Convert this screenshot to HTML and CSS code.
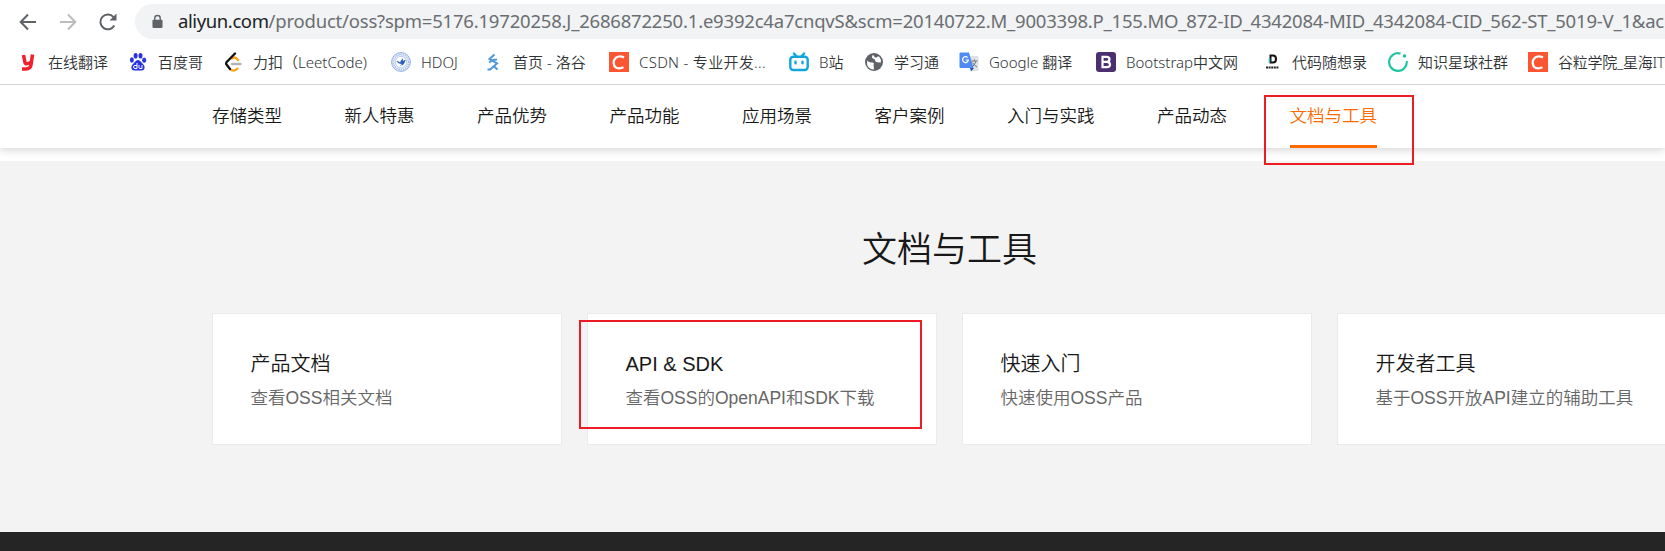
FILE: index.html
```html
<!DOCTYPE html>
<html lang="zh-CN">
<head>
<meta charset="utf-8">
<title>文档与工具</title>
<link rel="stylesheet" href="styles.css">
</head>
<body>
<div class="browser">
  <div class="toolbar">
    <svg class="tool back" viewBox="0 0 20 20"><path d="M18 10H3M10 2.5 2.7 10l7.3 7.5"/></svg>
    <svg class="tool forward" viewBox="0 0 20 20"><path d="M2 10h15M10 2.5l7.3 7.5-7.3 7.5"/></svg>
    <svg class="tool reload" viewBox="0 0 20 20"><path d="M16.3 13.5A7.4 7.4 0 1 1 15.500 5.200L17 7"/><path class="solid" d="M18.500 1.500v7h-7z"/></svg>
    <div class="omnibox">
      <svg class="lock" viewBox="0 0 12 15"><path d="M3 6V4a3 3 0 0 1 6 0v2" fill="none" stroke="#5f6368" stroke-width="1.500"/><rect x=".5" y="5.500" width="11" height="9" rx="1.300" fill="#5f6368"/></svg>
      <span class="host">aliyun.com</span><span class="path">/product/oss?spm=5176.19720258.J_2686872250.1.e9392c4a7cnqvS&amp;scm=20140722.M_9003398.P_155.MO_872-ID_4342084-MID_4342084-CID_562-ST_5019-V_1&amp;ac</span>
    </div>
  </div>
  <div class="bookmarks">
    <div class="mark w110"><svg viewBox="0 0 20 20"><path d="M5.500 3 7 10.500q.5 2 3 1L14 10M14.500 2.500 13 13q-.8 4-5 4H4" fill="none" stroke="#f0202c" stroke-width="3.500"/></svg><span>在线翻译</span></div>
    <div class="mark w95"><svg viewBox="0 0 20 20" fill="#2932e1"><ellipse cx="3.900" cy="8" rx="2" ry="2.700"/><ellipse cx="7.600" cy="3.800" rx="2" ry="2.800"/><ellipse cx="12.500" cy="3.800" rx="2" ry="2.800"/><ellipse cx="16.200" cy="8.200" rx="2" ry="2.600"/><path d="M10 8c2.500 0 3 2.300 5.200 4.200 2.500 2.200 1.500 6.300-1.500 6.300H6.300c-3 0-4-4.100-1.500-6.300C7 10.300 7.500 8 10 8z"/><path d="M9 11v5.500H7a1.500 1.500 0 0 1 0-3h2M11 13v2.500q0 1 1 1h2V13" fill="none" stroke="#fff"/></svg><span>百度哥</span></div>
    <div class="mark w168"><svg viewBox="0 0 20 20" fill="none" stroke-width="2.300" stroke-linecap="round"><path d="m9 6.500 2.500-1q1.500 0 3.500 2.500M7 17q3.500 3.500 7.500-.5" stroke="#ffa116"/><path d="m12 1.500-8.500 8.800q-.8 1.200 0 2.200L7 17" stroke="#111"/><path d="M9 12h8.500" stroke="#b3b3b3"/></svg><span>力扣（LeetCode)</span></div>
    <div class="mark w92"><svg viewBox="0 0 20 20"><circle cx="10" cy="10" r="9.400" fill="#e3ebf8" stroke="#8faee0"/><circle cx="10" cy="10" r="7.600" fill="none" stroke="#9bb5e4" stroke-dasharray="1 1.200" stroke-width="1.300"/><circle cx="10" cy="10" r="5.700" fill="#fff" stroke="#a9c0e8" stroke-width=".7"/><path d="M5.500 9q3 0 3.500 1.500Q10 7.500 12 6q-.5 2 0 3 1-1 3-1-1 1-1.500 3-1.500 3-5 2.500 2-1 2.500-1.500-4 0-5.500-3z" fill="#2860bd"/></svg><span>HDOJ</span></div>
    <div class="mark w126"><svg viewBox="0 0 20 20" fill="none" stroke="#4f96d8" stroke-width="2"><path d="M11.500 2.500 6.500 7l7.500 4.500-7 6H4.500M6 10.500l4-2.500 4-.5M10.500 14l4 3.500"/></svg><span>首页 - 洛谷</span></div>
    <div class="mark w180 wide"><svg viewBox="0 0 20 20"><path fill="#fc5531" d="M0 0h20v20H0z"/><path d="M15 5.500q-4.500-2.500-8 .2-2.500 2.300-2.300 5.300.3 5.200 5.500 5.300 2 0 4.300-1" fill="none" stroke="#fff" stroke-width="2.300"/></svg><span>CSDN - 专业开发...</span></div>
    <div class="mark w75"><svg viewBox="0 0 20 20" fill="none" stroke="#10a5dc" stroke-width="2.400" stroke-linecap="round"><rect x="1.300" y="4.700" width="17.400" height="13.300" rx="3"/><path d="m5 1.500 2.500 3M15 1.500l-2.500 3M6.500 9.800v1.400M13.500 9.800v1.400"/></svg><span>B站</span></div>
    <div class="mark w95"><svg viewBox="0 0 20 20"><circle cx="10" cy="10" r="9" fill="#5f6368"/><path d="M3 8.500q2 2.500 5 2 3 .5 1.500 2.500L10 17.500q-5-.2-6.800-4.500M9 2.800q-2 2.800 0 3.700Q12 7.500 11 9q2 2 5.800 1.500 1-4-2.800-6.500-.5 2-3 1.500" fill="#fff"/></svg><span>学习通</span></div>
    <div class="mark w137"><svg viewBox="0 0 20 20"><path d="M9 4h9.500q1 0 1 1v13q0 1-1 1H12z" fill="#dfe1e5"/><path d="M11 16h4l-3 3.500z" fill="#2852b8"/><path d="M1.500.5H10l4.500 15.500h-13Q.5 16 .5 15V1.500q0-1 1-1z" fill="#4f8bf5"/><path d="M8.700 5.700a2.900 2.900 0 1 0 .7 2.300H6.600" fill="none" stroke="#fff" stroke-width="1.200"/><path d="M12.500 9h6M15.500 7.500V9M17 9q-1 4-4 6M13.500 10.500q1.500 3 4.500 4.500" fill="none" stroke="#70777f"/></svg><span>Google 翻译</span></div>
    <div class="mark w166"><svg viewBox="0 0 20 20"><rect width="20" height="20" rx="3" fill="#4b3070"/><path d="M6.500 4.800h4q3 0 3 2.500t-3 2.500h-4zm0 5h4.300q3.200 0 3.200 2.700t-3.200 2.700H6.500z" fill="none" stroke="#fff" stroke-width="2.200"/></svg><span>Bootstrap中文网</span></div>
    <div class="mark w126"><svg viewBox="0 0 20 20"><path d="M8.500 3.500v7h2.500q3 0 3-3.500t-3-3.500z" fill="none" stroke="#111" stroke-width="2"/><path d="M7.500 6v5" stroke="#35b3b1" stroke-width="1.500"/><path d="M4 15.500h13" stroke="#222" stroke-width="2" stroke-dasharray="2 .6"/></svg><span>代码随想录</span></div>
    <div class="mark w140"><svg viewBox="0 0 20 20"><path d="M12.500 1.600A8.800 8.800 0 1 0 18.700 9" fill="none" stroke="#1fc5a0" stroke-width="2.200"/><circle cx="16.500" cy="4" r="1.800" fill="#1fc5a0"/></svg><span>知识星球社群</span></div>
    <div class="mark last"><svg viewBox="0 0 20 20"><path fill="#fc5531" d="M0 0h20v20H0z"/><path d="M15 5.500q-4.500-2.500-8 .2-2.500 2.300-2.300 5.300.3 5.200 5.500 5.300 2 0 4.300-1" fill="none" stroke="#fff" stroke-width="2.300"/></svg><span>谷粒学院_星海IT</span></div>
  </div>
</div>
<nav class="tabs">
  <a>存储类型</a><a>新人特惠</a><a>产品优势</a><a>产品功能</a><a>应用场景</a><a>客户案例</a><a>入门与实践</a><a>产品动态</a><a class="active">文档与工具</a>
</nav>
<main class="docs">
  <h1>文档与工具</h1>
  <div class="cards">
    <section class="card"><h2>产品文档</h2><p>查看OSS相关文档</p></section>
    <section class="card"><h2>API &amp; SDK</h2><p>查看OSS的OpenAPI和SDK下载</p></section>
    <section class="card"><h2>快速入门</h2><p>快速使用OSS产品</p></section>
    <section class="card"><h2>开发者工具</h2><p>基于OSS开放API建立的辅助工具</p></section>
  </div>
</main>
<footer class="footer"></footer>
<div class="callout callout-tab"></div>
<div class="callout callout-card"></div>
</body>
</html>
```
FILE: styles.css
```css
* { box-sizing: border-box; }
body {
  margin: 0;
  width: 1665px;
  height: 551px;
  overflow: hidden;
  position: relative;
  background: #fff;
  font-family: "Liberation Sans", "Noto Sans CJK SC", sans-serif;
  font-weight: 350;
  color: #181818;
}
.browser {
  height: 85px;
  border-bottom: 1px solid #d5d5d5;
  font-family: "Noto Sans", "Noto Sans CJK SC", sans-serif;
  overflow: hidden;
}
.toolbar {
  display: flex;
  align-items: center;
  gap: 20px;
  padding: 4px 0 0 18px;
  height: 39px;
}
.tool {
  width: 20px;
  height: 20px;
  flex: none;
  fill: none;
  stroke: #5f6368;
  stroke-width: 2;
}
.forward { stroke: #babcbe; }
.reload .solid { fill: #5f6368; stroke: none; }
.omnibox {
  display: flex;
  align-items: center;
  flex: 1;
  min-width: 0;
  height: 35px;
  margin-left: -3px;
  padding: 0 0 2px 17px;
  border-radius: 18px 0 0 18px;
  background: #f1f3f4;
  font-size: 18.5px;
  font-weight: 400;
  white-space: nowrap;
  overflow: hidden;
}
.lock { width: 11px; height: 15px; margin: 2px 15px 0 0; flex: none; }
.host { color: #202124; letter-spacing: -0.4px; }
.path { color: #6b6e72; letter-spacing: -0.2px; }
.bookmarks {
  display: flex;
  padding-left: 18px;
  height: 46px;
  align-items: center;
}
.mark {
  display: flex;
  align-items: center;
  gap: 10px;
  flex: none;
  white-space: nowrap;
  font-size: 15px;
  font-weight: 350;
  line-height: 20px;
  color: #303336;
}
.mark svg { width: 20px; height: 20px; flex: none; }
.wide { letter-spacing: 0.3px; }
.last { letter-spacing: -0.25px; }
.w75 { width: 75px; }
.w92 { width: 92px; }
.w95 { width: 95px; }
.w110 { width: 110px; }
.w126 { width: 126px; }
.w137 { width: 137px; }
.w140 { width: 140px; }
.w166 { width: 166px; }
.w168 { width: 168px; }
.w180 { width: 180px; }
.tabs {
  display: flex;
  gap: 62.5px;
  height: 63px;
  padding-left: 212px;
  font-size: 17.5px;
  line-height: 62px;
  white-space: nowrap;
  box-shadow: 0 2px 8px rgba(0, 0, 0, .17);
  clip-path: inset(0 0 -12px 0);
}
.active { color: #ff6a00; border-bottom: 3px solid #ff6a00; }
.docs {
  height: 371px;
  margin-top: 13px;
  padding: 64px 0 0 212px;
  background: #f3f3f3;
}
h1 {
  width: 1475px;
  margin: 0 0 38px;
  text-align: center;
  font-size: 35px;
  line-height: 50px;
  font-weight: 350;
}
.cards { display: flex; gap: 25px; }
.card {
  flex: none;
  width: 350px;
  height: 132px;
  padding: 35px 37px 0 37.5px;
  border: 1px solid #ebebeb;
  background: #fff;
}
h2 { margin: 0; font-size: 20px; line-height: 30px; font-weight: 350; }
p { margin: 4px 0 0; font-size: 17.5px; line-height: 30px; color: #666; white-space: nowrap; }
.footer { height: 19px; background: #252525; }
.callout { position: absolute; border: 2px solid #ed1c24; }
.callout-tab { left: 1264px; top: 95px; width: 150px; height: 70px; }
.callout-card { left: 579px; top: 320px; width: 343px; height: 109px; }
```
